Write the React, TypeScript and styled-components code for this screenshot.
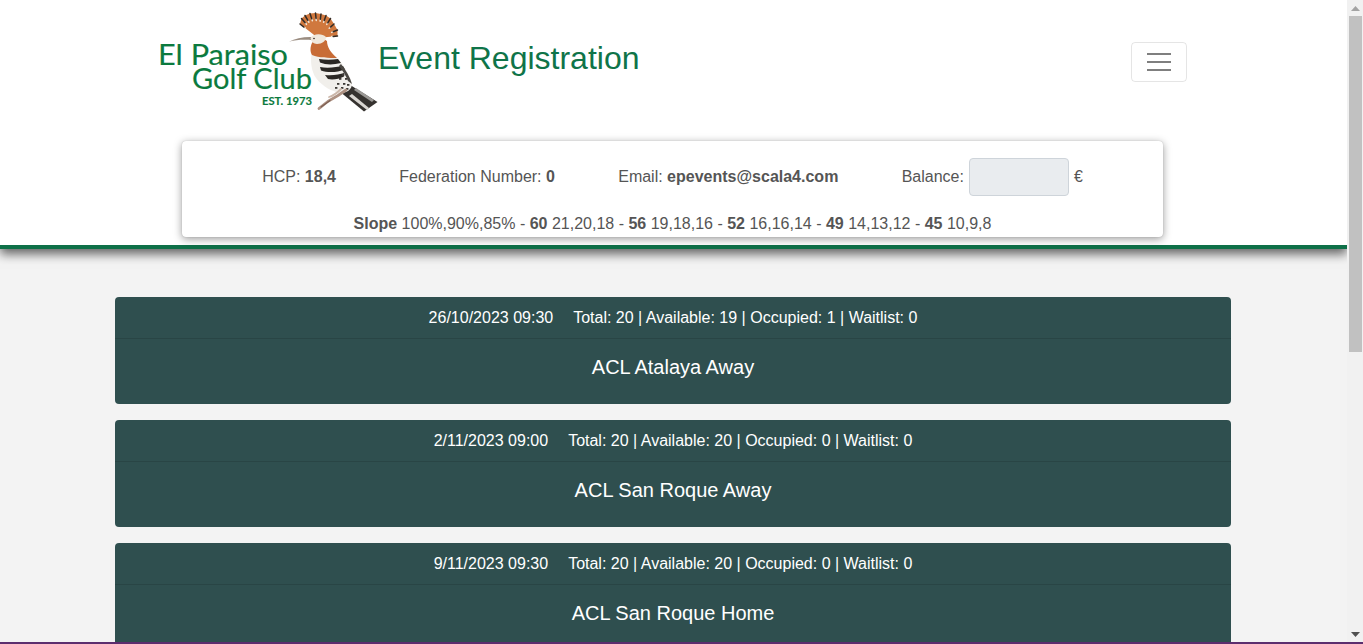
import React from "react";
import styled, { createGlobalStyle } from "styled-components";

const Global = createGlobalStyle`
  html, body { margin: 0; padding: 0; height: 100%; overflow: hidden; }
  body { font-family: "Liberation Sans", Arial, sans-serif; font-size: 16px; line-height: 1.5; color: #212529; background: #f3f3f3; }
  * { box-sizing: border-box; }
`;

const Shell = styled.div`
  display: flex;
  flex-direction: column;
  height: 100vh;
`;
const Viewport = styled.div`
  flex: 1;
  min-height: 0;
  display: flex;
`;
const Page = styled.main`
  flex: 1;
  min-width: 0;
  overflow: hidden;
`;
const Rail = styled.div`
  flex: 0 0 16px;
  padding: 0 1px 0 2px;
  display: flex;
  flex-direction: column;
  background: #f1f1f1;
`;
const RailButton = styled.div`
  flex: 0 0 16px;
  display: flex;
  align-items: center;
  justify-content: center;
`;
const Thumb = styled.div`
  flex: 0 0 336px;
  background: #c1c1c1;
`;
const RailGap = styled.div`
  flex: 1;
`;
const BottomLine = styled.div`
  flex: 0 0 2px;
  background: #5c2d6e;
`;

const Header = styled.header`
  position: relative;
  height: 249px;
  padding-top: 12px;
  background: #fff;
  border-bottom: 4px solid #0e7048;
  box-shadow: 0 5px 10px rgba(0, 0, 0, 0.6);
`;
const Brand = styled.div`
  margin: 0 160px 0 158px;
  height: 100px;
  display: flex;
  align-items: flex-start;
`;
const Logo = styled.svg`
  display: block;
  flex: 0 0 220px;
`;
const Title = styled.h1`
  margin: 25px 0 0;
  flex: 1;
  font-size: 32px;
  font-weight: 400;
  line-height: 42px;
  color: #0f7449;
`;
const Toggler = styled.button`
  width: 56px;
  height: 40px;
  margin-top: 30px;
  padding: 0;
  display: flex;
  flex-direction: column;
  justify-content: center;
  align-items: center;
  gap: 6px;
  background: transparent;
  border: 1px solid rgba(0, 0, 0, 0.1);
  border-radius: 4px;
`;
const TogglerBar = styled.span`
  display: block;
  width: 24px;
  height: 2px;
  background: #7f7f7f;
`;
const InfoCard = styled.section`
  height: 96px;
  margin: 29px 184px 0 182px;
  padding-top: 17px;
  background: #fff;
  border-radius: 4px;
  box-shadow: 0 0 1px rgba(0, 0, 0, 0.25), 0 2px 8px rgba(0, 0, 0, 0.4);
  color: #555;
`;
const InfoRow = styled.div`
  height: 38px;
  display: flex;
  justify-content: center;
  align-items: center;
  gap: 63.3px;
`;
const InfoItem = styled.span`
  display: flex;
  align-items: center;
  white-space: pre;
`;
const BalanceField = styled.span`
  display: block;
  width: 100px;
  height: 38px;
  margin: 0 5px;
  background: #e9ecef;
  border: 1px solid #ced4da;
  border-radius: 4px;
`;
const SlopeRow = styled.div`
  margin-top: 16px;
  text-align: center;
  white-space: pre;
`;

const Events = styled.div`
  padding: 48px 116px 0 115px;
  display: flex;
  flex-direction: column;
  gap: 16px;
`;
const EventCard = styled.article`
  height: 107px;
  flex: none;
  background: #2f4f4f;
  border-radius: 4px;
  color: #fff;
  text-align: center;
`;
const EventHeader = styled.div`
  height: 42px;
  padding-top: 9px;
  border-bottom: 1px solid rgba(0, 0, 0, 0.125);
  white-space: pre;
`;
const EventDate = styled.span`
  margin-right: 20px;
`;
const EventTitle = styled.h2`
  margin: 0;
  padding-top: 16px;
  font-size: 20px;
  font-weight: 400;
  line-height: 24px;
`;

const events = [
  { when: "26/10/2023 09:30", available: 19, occupied: 1, name: "ACL Atalaya Away" },
  { when: "2/11/2023 09:00", available: 20, occupied: 0, name: "ACL San Roque Away" },
  { when: "9/11/2023 09:30", available: 20, occupied: 0, name: "ACL San Roque Home" },
];

const GREEN = "#0b7a3e";

function LogoMark() {
  const base: [number, number] = [318, 38];
  const tips: [number, number][] = [
    [300, 24],
    [301.5, 18.5],
    [305, 15.5],
    [310, 13.5],
    [315.5, 13],
    [321, 14],
    [326, 15.5],
    [330.5, 18.5],
    [334, 24],
    [337.5, 30],
    [337.5, 36],
  ];
  const fan = `M${base[0]} ${base[1]} ` + tips.map(([x, y]) => `L${x} ${y}`).join(" ") + " Z";
  const speckles: [number, number][] = [
    [342, 74], [345, 78], [339, 78], [343, 83], [347, 84], [337, 83], [341, 87], [346, 88], [335, 87],
  ];
  return (
    <Logo width="220" height="100" viewBox="158 12 220 100" role="img" aria-label="El Paraiso Golf Club">
      <g fill={GREEN} stroke={GREEN} strokeWidth="0.15" fontFamily="Lato, 'Open Sans', sans-serif">
        <text x="158" y="65" fontSize="29" textLength="130" lengthAdjust="spacingAndGlyphs">El Paraiso</text>
        <text x="192" y="89" fontSize="29" textLength="120" lengthAdjust="spacingAndGlyphs">Golf Club</text>
        <text x="262" y="105" fontSize="10.5" fontWeight="700" textLength="50" lengthAdjust="spacingAndGlyphs">EST. 1973</text>
      </g>
      {/* crest */}
      <path d={fan} fill="#d0783e" />
      {tips.map(([x, y], i) => {
        const tx = base[0] + (x - base[0]) * 0.7;
        const ty = base[1] + (y - base[1]) * 0.7;
        const wx = base[0] + (x - base[0]) * 0.78;
        const wy = base[1] + (y - base[1]) * 0.78;
        return (
          <g key={i} fill="none" strokeLinecap="round">
            <line x1={tx} y1={ty} x2={wx} y2={wy} stroke="#f3e6d6" strokeWidth="1.5" />
            <line x1={wx} y1={wy} x2={x} y2={y} stroke="#332c26" strokeWidth="1.5" />
          </g>
        );
      })}
      {/* beak */}
      <path d="M289 41.8 C295 38.2 303 36.8 312 37 L313 40.2 C304 39.4 296 39.8 289 41.8 Z" fill="#9a8c80" />
      {/* tail */}
      <path d="M347 83 L377.5 102 L364 111.5 L339 91 Z" fill="#35322f" />
      <path d="M352 94 L369 108 L367 110 L349 96 Z" fill="#d9d6d1" />
      <path d="M356 88 L374 100 L372 102 L354 90 Z" fill="#9a9895" />
      {/* body */}
      <path d="M312 51 C310 60 311 71 316 78 C322 86 332 92 341 93 C347 93 352 89 352 84 C349 74 344 65 337 58 C331 53 320 49 312 51 Z" fill="#f1efeb" />
      <path d="M319 59 C325 60 332 60 338 59 L341 63 C333 65 326 65 320 62.5 Z" fill="#2b2824" />
      <path d="M320 67 C328 68.5 337 67 343 66 L345 69.5 C337 72.5 328 73 321 70.5 Z" fill="#2b2824" />
      <path d="M325 75 C332 76 340 74.5 344 73 L344 76.5 C339 79 333 80 328 79 Z" fill="#2b2824" />
      {speckles.map(([x, y], i) => (
        <rect key={i} x={x} y={y} width="2.4" height="1.8" fill="#3d3a36" />
      ))}
      <path d="M341 64 C346 70 350 77 352 84 L348 81 C346 76 343 71 339 66 Z" fill="#4a4743" />
      {/* neck and head */}
      <path d="M312 43 C310 47 310 52 312 55 C319 58 329 58 337 58 C331 53 327 47 327 41 C322 37 315 38 312 43 Z" fill="#c86c36" />
      <path d="M310.5 38 C313 33.5 322 33 326 37 C326 41 322 44 317 44 C313.5 44 311 41 310.5 38 Z" fill="#f0e8dc" />
      <circle cx="314" cy="38.5" r="0.8" fill="#2a2320" />
      {/* legs and branch */}
      <path d="M319 108.5 C325 103 331 99 338 95.5 L346 90" fill="none" stroke="#ae9283" strokeWidth="2.8" strokeLinecap="round" />
      <path d="M329 97 C333 96 337 93 341 89" fill="none" stroke="#cbb7aa" strokeWidth="1.8" strokeLinecap="round" />
      <path d="M321 107 L330 100.5" fill="none" stroke="#7d5f52" strokeWidth="1.2" strokeLinecap="round" />
    </Logo>
  );
}

export default function App() {
  return (
    <Shell>
      <Global />
      <Viewport>
        <Page>
          <Header>
            <Brand>
              <LogoMark />
              <Title>Event Registration</Title>
              <Toggler aria-label="Toggle navigation">
                <TogglerBar />
                <TogglerBar />
                <TogglerBar />
              </Toggler>
            </Brand>
            <InfoCard>
              <InfoRow>
                <InfoItem>HCP: <b>18,4</b></InfoItem>
                <InfoItem>Federation Number: <b>0</b></InfoItem>
                <InfoItem>Email: <b>epevents@scala4.com</b></InfoItem>
                <InfoItem>Balance:<BalanceField />€</InfoItem>
              </InfoRow>
              <SlopeRow>
                <b>Slope</b> 100%,90%,85% - <b>60</b> 21,20,18 - <b>56</b> 19,18,16 - <b>52</b> 16,16,14 - <b>49</b> 14,13,12 - <b>45</b> 10,9,8
              </SlopeRow>
            </InfoCard>
          </Header>
          <Events>
            {events.map((e) => (
              <EventCard key={e.name}>
                <EventHeader>
                  <EventDate>{e.when}</EventDate>Total: 20 | Available: {e.available} | Occupied: {e.occupied} | Waitlist: 0
                </EventHeader>
                <EventTitle>{e.name}</EventTitle>
              </EventCard>
            ))}
          </Events>
        </Page>
        <Rail>
          <RailButton>
            <svg width="9" height="5" viewBox="0 0 9 5"><path d="M4.5 0 L9 5 H0 Z" fill="#a3a3a3" /></svg>
          </RailButton>
          <Thumb />
          <RailGap />
          <RailButton>
            <svg width="9" height="5" viewBox="0 0 9 5"><path d="M0 0 H9 L4.5 5 Z" fill="#505050" /></svg>
          </RailButton>
        </Rail>
      </Viewport>
      <BottomLine />
    </Shell>
  );
}
